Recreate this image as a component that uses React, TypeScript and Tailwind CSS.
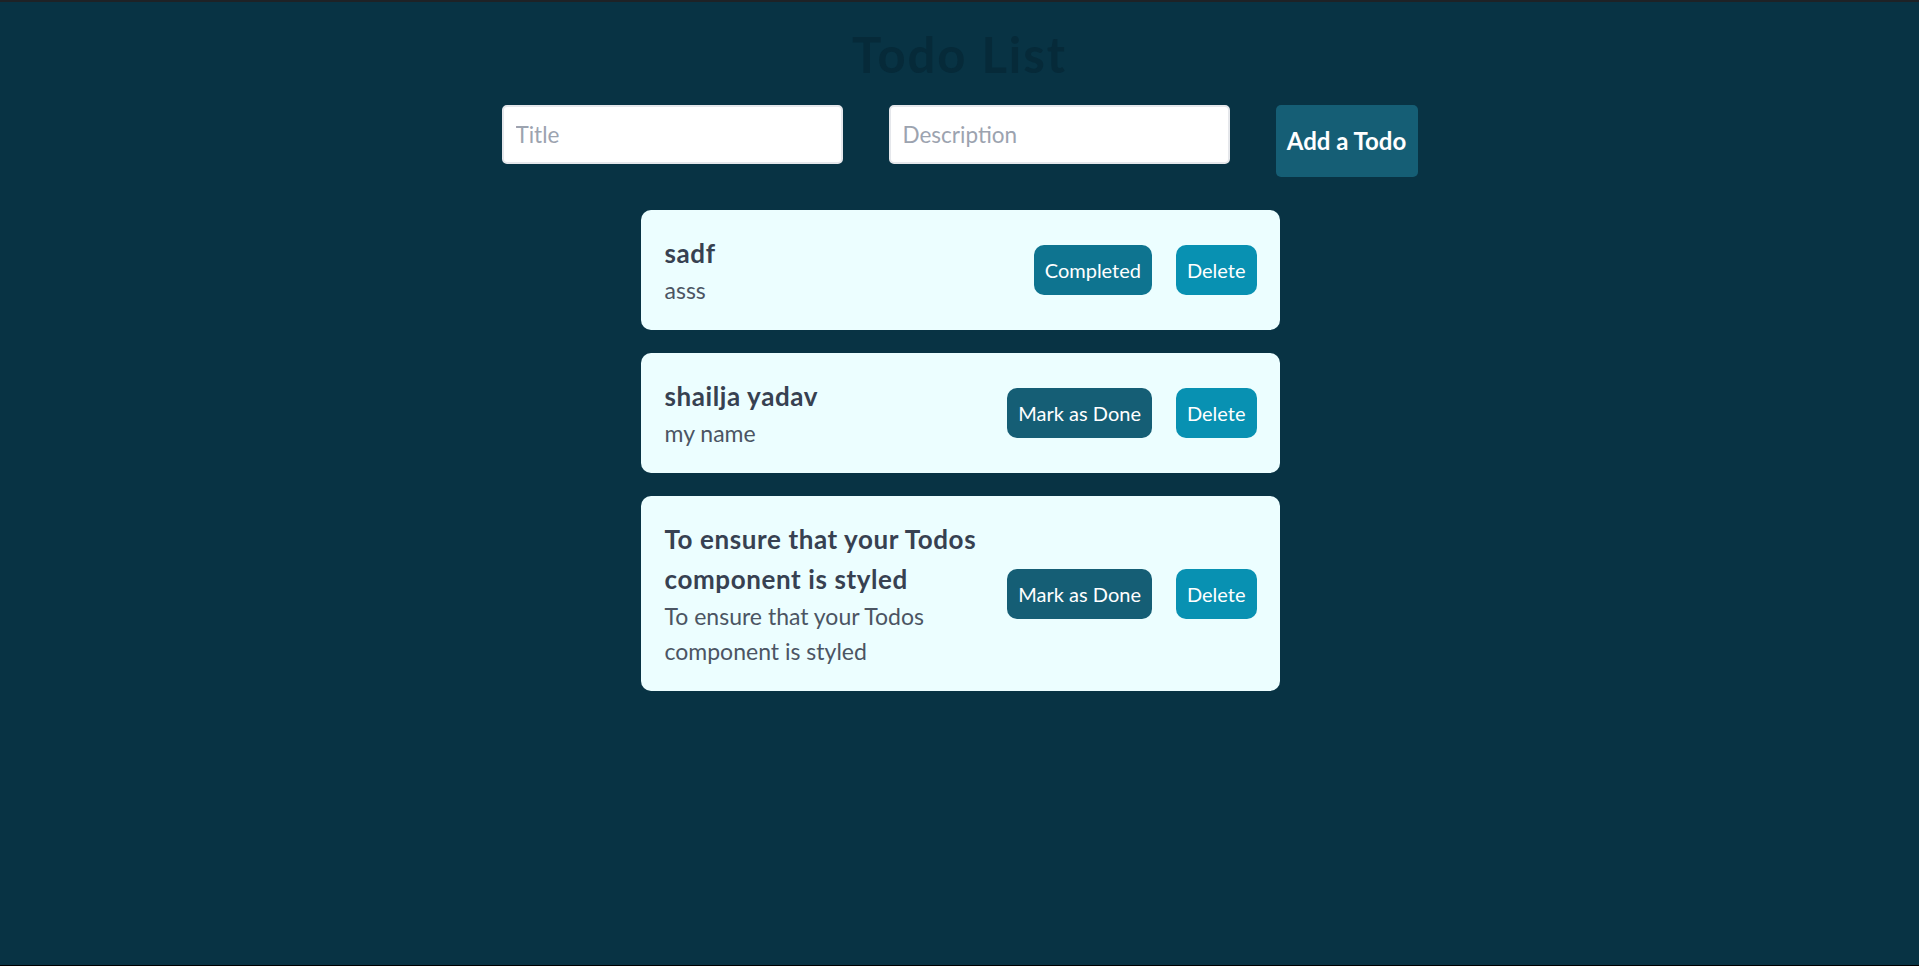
import React from "react";

type Todo = { title: string; description: string; completed: boolean };

const todos: Todo[] = [
  { title: "sadf", description: "asss", completed: true },
  { title: "shailja yadav", description: "my name", completed: false },
  {
    title: "To ensure that your Todos component is styled",
    description: "To ensure that your Todos component is styled",
    completed: false,
  },
];

export default function App() {
  return (
    <div
      className="min-h-[966px] bg-[#083344] border-t-2 border-t-[#1e2226] border-b border-b-black flex flex-col items-center"
      style={{ fontFamily: "Lato, 'Open Sans', sans-serif" }}
    >
      <h1 className="mt-[28px] text-[49px] leading-[48px] tracking-[2px] font-bold text-[#062a39]">Todo List</h1>

      <div className="mt-[27px] flex items-start gap-[46px]">
        <input
          type="text"
          placeholder="Title"
          className="w-[341px] h-[59px] bg-white border-2 border-[#e5e7eb] rounded-[5px] pl-[12px] text-[22.5px] text-gray-700 placeholder:text-[#9ca3af] outline-none"
        />
        <input
          type="text"
          placeholder="Description"
          className="w-[341px] h-[59px] bg-white border-2 border-[#e5e7eb] rounded-[5px] pl-[12px] text-[22.5px] text-gray-700 placeholder:text-[#9ca3af] outline-none"
        />
        <button className="w-[142px] h-[72px] bg-[#155e75] rounded-[5px] text-white font-bold text-[24px]">
          Add a Todo
        </button>
      </div>

      <div className="mt-[33px] w-[639px] ml-px flex flex-col gap-[23px]">
        {todos.map((t, i) => (
          <div
            key={i}
            className="bg-[#ecfeff] rounded-[10px] pl-6 pr-[23px] py-[22.5px] flex items-center justify-between"
          >
            <div className="flex-1 min-w-0 pr-6">
              <h2 className="text-[26px] leading-[40px] tracking-[0.6px] font-bold text-[#374151]">{t.title}</h2>
              <p className="text-[23px] leading-[35px] text-[#4b5563]">{t.description}</p>
            </div>
            <div className="flex items-center gap-6 shrink-0">
              {t.completed ? (
                <button className="h-[50px] px-[11px] rounded-[10px] bg-[#0e7490] text-white text-[20px]">
                  Completed
                </button>
              ) : (
                <button className="h-[50px] px-[11px] rounded-[10px] bg-[#155e75] text-white text-[20px]">
                  Mark as Done
                </button>
              )}
              <button className="h-[50px] px-[11px] rounded-[10px] bg-[#0891b2] text-white text-[20px]">
                Delete
              </button>
            </div>
          </div>
        ))}
      </div>
    </div>
  );
}
